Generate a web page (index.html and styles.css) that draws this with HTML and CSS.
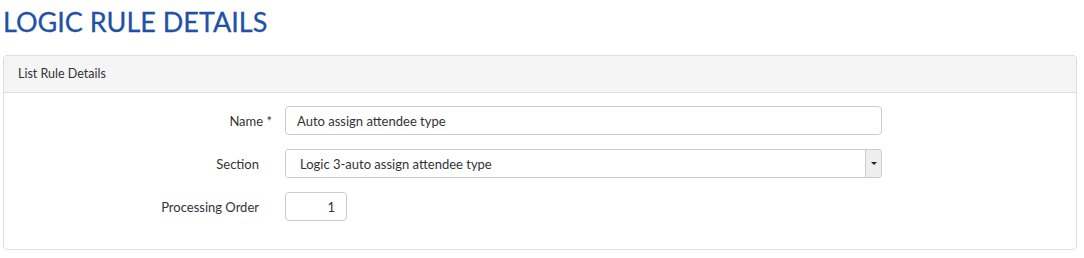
FILE: index.html
```html
<!DOCTYPE html>
<html lang="en">
<head>
  <meta charset="UTF-8" />
  <title>Logic Rule Details</title>
  <link rel="stylesheet" href="styles.css">
</head>
<body>
  <h1 class="page-title">LOGIC RULE DETAILS</h1>
  <div class="panel">
    <div class="panel-heading">List Rule Details</div>
    <div class="panel-body">
      <form class="rule-form">
        <label class="form-label required" for="name">Name</label>
        <input class="form-control" type="text" id="name" value="Auto assign attendee type" />

        <label class="form-label" for="section">Section</label>
        <div class="select-wrap">
          <select class="form-select" id="section">
            <option>Logic 3-auto assign attendee type</option>
          </select>
          <span class="select-btn"><span class="caret"></span></span>
        </div>

        <label class="form-label" for="order">Processing Order</label>
        <input class="form-control order-input" type="text" id="order" value="1" />
      </form>
    </div>
  </div>
</body>
</html>
```

FILE: styles.css
```css
:root {
  --title-blue: #1f52a6;
  --text-dark: #333333;
  --border-grey: #dddddd;
  --input-border: #cccccc;
  --heading-bg: #f5f5f5;
  --font-family: Lato, 'Open Sans', sans-serif;
}

body {
  margin: 0;
  padding: 0 7px 0 3px;
  font-family: var(--font-family);
  font-size: 13px;
  color: var(--text-dark);
  background-color: #fff;
}

.page-title {
  margin: 5px 0 16px;
  font-size: 27px;
  line-height: 34px;
  font-weight: 400;
  color: var(--title-blue);
  -webkit-text-stroke: 0.3px var(--title-blue);
}

.panel {
  border: 1px solid var(--border-grey);
  border-radius: 4px;
  overflow: hidden;
}

.panel-heading {
  height: 36px;
  line-height: 36px;
  padding: 0 14px;
  background-color: var(--heading-bg);
  border-bottom: 1px solid var(--border-grey);
  font-size: 12.5px;
}

.panel-body {
  padding: 13px 0 28px;
}

.rule-form {
  display: grid;
  grid-template-columns: 268px 597px;
  column-gap: 13px;
  row-gap: 14px;
  align-items: center;
}

.form-label {
  text-align: right;
  padding-right: 13px;
}

.form-label.required {
  padding-right: 0;
}

.form-label.required::after {
  content: " *";
}

.form-control {
  box-sizing: border-box;
  height: 29px;
  padding: 0 11px;
  border: 1px solid var(--input-border);
  border-radius: 4px;
  font-family: var(--font-family);
  font-size: 13px;
  color: var(--text-dark);
}

.order-input {
  width: 62px;
  text-align: right;
}

.select-wrap {
  display: flex;
  box-sizing: border-box;
  height: 29px;
  border: 1px solid var(--input-border);
  border-radius: 3px;
  overflow: hidden;
}

.form-select {
  flex: 1;
  -webkit-appearance: none;
  appearance: none;
  border: none;
  background: #fff;
  padding: 0 14px;
  font-family: var(--font-family);
  font-size: 13px;
  color: var(--text-dark);
}

.select-btn {
  width: 15px;
  display: flex;
  align-items: center;
  justify-content: center;
  background-color: #eeeeee;
  border-left: 1px solid var(--input-border);
}

.caret {
  width: 0;
  height: 0;
  border-left: 3px solid transparent;
  border-right: 3px solid transparent;
  border-top: 3px solid #222;
}
```
